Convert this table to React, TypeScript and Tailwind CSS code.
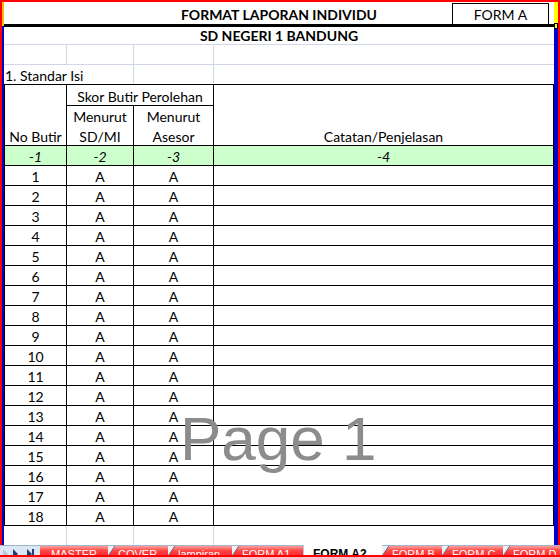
type SheetTabItem = {
  label: string;
  width: string;
  active?: boolean;
  first?: boolean;
};

const sheetTabs: SheetTabItem[] = [
  { label: 'MASTER', width: 'w-[68px]', first: true },
  { label: 'COVER', width: 'w-[60px]' },
  { label: 'lampiran', width: 'w-[64px]' },
  { label: 'FORM A1', width: 'w-[71px]' },
  { label: 'FORM A2', width: 'w-[79px]', active: true },
  { label: 'FORM B', width: 'w-[60px]' },
  { label: 'FORM C', width: 'w-[61px]' },
  { label: 'FORM D', width: 'w-[57px]' },
];

const butirList = Array.from({ length: 18 }, (_, i) => i + 1);

function SheetTab({ tab }: { tab: SheetTabItem }) {
  if (tab.active) {
    return (
      <div
        className={`${tab.width} h-full shrink-0 overflow-hidden border-l border-[#b9c9dd] bg-white pl-[9px] pt-[3px] font-['Liberation_Sans',sans-serif] text-[12px] font-bold leading-[12px] text-black`}
      >
        {tab.label}
      </div>
    );
  }

  return (
    <div
      className={`${tab.width} relative h-full shrink-0 overflow-hidden border-t border-[#9eb6ce] bg-linear-to-b from-[#ff9c9c] via-[#ff4646] to-[#ff2b2b] pt-[2px] font-['Liberation_Sans',sans-serif] text-[11px] leading-[12px] text-white ${tab.first ? 'text-center' : 'pl-[10px]'}`}
    >
      {!tab.first && (
        <svg className="absolute left-0 top-[-1px]" width="8" height="11" viewBox="0 0 8 11">
          <polygon points="0,0 7.5,0 0,11" fill="#eef2f8" />
          <line x1="0" y1="11" x2="7.5" y2="0" stroke="#5d6f8c" strokeWidth="1" />
        </svg>
      )}
      {tab.label}
    </div>
  );
}

function TabBar() {
  return (
    <div className="flex h-[12px] flex-col">
      <div className="flex h-[10px] overflow-hidden">
        <div className="h-full w-[40px] shrink-0 border-t border-[#9eb6ce] bg-[#dce7f5]">
          <svg width="40" height="9" viewBox="0 0 40 9">
            <polygon points="3,3 8,8 3,13" fill="#b7c9e2" />
            <polygon points="13,3 18,8 13,13" fill="#1f3f77" />
            <polygon points="27,3 32,8 27,13" fill="#1f3f77" />
            <rect x="32" y="3" width="2" height="10" fill="#1f3f77" />
          </svg>
        </div>
        {sheetTabs.map((tab) => (
          <SheetTab key={tab.label} tab={tab} />
        ))}
      </div>
      <div className="h-[2px] bg-[#ff0000]" />
    </div>
  );
}

function Sheet() {
  return (
    <div className="flex w-[550px] flex-col text-[14px] leading-[16px] text-black">
      {/* judul */}
      <div className="grid h-[22px] grid-cols-[102px_346px_102px]">
        <div />
        <div className="flex items-end justify-center pb-[1px] font-bold whitespace-nowrap">
          FORMAT LAPORAN INDIVIDU
        </div>
        <div className="pt-[1px]">
          <div className="flex h-[21px] w-[97px] items-end justify-center border-x border-t border-black pb-[1px]">
            FORM A
          </div>
        </div>
      </div>
      <div className="h-[3px] bg-black" />
      <div className="flex h-[18px] items-end justify-center border-b border-[#d0d7e5] font-bold">
        SD NEGERI 1 BANDUNG
      </div>

      {/* baris kosong */}
      <div className="flex h-[20px] border-b border-[#d0d7e5]">
        <div className="w-[63px] border-r border-[#d0d7e5]" />
        <div className="w-[67px] border-r border-[#d0d7e5]" />
        <div className="w-[80px] border-r border-[#d0d7e5]" />
      </div>
      <div className="flex h-[20px] border-b border-black">
        <div className="flex w-[130px] items-end border-r border-[#d0d7e5] pl-[1px] whitespace-nowrap">
          1. Standar Isi
        </div>
        <div className="w-[80px] border-r border-[#d0d7e5]" />
      </div>

      {/* header tabel */}
      <div className="flex h-[61px] border-b border-black">
        <div className="flex w-[63px] items-end justify-center border-x border-black whitespace-nowrap">
          No Butir
        </div>
        <div className="flex w-[147px] flex-col">
          <div className="flex h-[21px] items-end justify-center border-b border-r border-black whitespace-nowrap">
            Skor Butir Perolehan
          </div>
          <div className="flex flex-1">
            <div className="flex w-[67px] flex-col items-center justify-end gap-[4px] border-r border-black">
              <span>Menurut</span>
              <span>SD/MI</span>
            </div>
            <div className="flex w-[80px] flex-col items-center justify-end gap-[4px] border-r border-black">
              <span>Menurut</span>
              <span>Asesor</span>
            </div>
          </div>
        </div>
        <div className="flex w-[340px] items-end justify-center border-r border-black">
          Catatan/Penjelasan
        </div>
      </div>

      {/* nomor kolom */}
      <div className="flex h-[20px] border-b border-black bg-[#ccffcc] italic">
        <div className="flex w-[63px] items-end justify-center border-x border-black">-1</div>
        <div className="flex w-[67px] items-end justify-center border-r border-black">-2</div>
        <div className="flex w-[80px] items-end justify-center border-r border-black">-3</div>
        <div className="flex w-[340px] items-end justify-center border-r border-black">-4</div>
      </div>

      {butirList.map((no) => (
        <div key={no} className="flex h-[20px] border-b border-black">
          <div className="flex w-[63px] items-end justify-center border-x border-black">{no}</div>
          <div className="flex w-[67px] items-end justify-center border-r border-black">A</div>
          <div className="flex w-[80px] items-end justify-center border-r border-black">A</div>
          <div className="w-[340px] border-r border-black" />
        </div>
      ))}

      <div className="flex h-[19px]">
        <div className="w-[63px] border-r border-[#d0d7e5]" />
        <div className="w-[67px] border-r border-[#d0d7e5]" />
        <div className="w-[80px] border-r border-[#d0d7e5]" />
      </div>
    </div>
  );
}

export default function App() {
  return (
    <div className="relative flex h-[557px] w-[560px] flex-col overflow-hidden bg-white font-['Lato',sans-serif]">
      <div className="h-[2px] bg-[#ff0000]" />
      <div className="flex h-[543px]">
        <div className="w-[2px] bg-[#ff0000]" />
        <div className="flex w-[2px] flex-col">
          <div className="h-[24px] bg-[#ffc000]" />
          <div className="flex-1 bg-[#0000cc]" />
        </div>
        <Sheet />
        <div className="flex w-[4px] flex-col">
          <div className="h-[21px] bg-[#ffff00]" />
          <div className="h-[6px] border border-black bg-[#ffff00]" />
          <div className="flex-1 bg-[#0000cc]" />
        </div>
        <div className="w-[2px] bg-[#ff0000]" />
      </div>
      <TabBar />

      {/* tanda halaman (page break preview) */}
      <div className="pointer-events-none absolute left-[180px] top-[408px] font-['Liberation_Sans',sans-serif] text-[62px] leading-none text-[#8c8c8c]">
        Page 1
      </div>
    </div>
  );
}
